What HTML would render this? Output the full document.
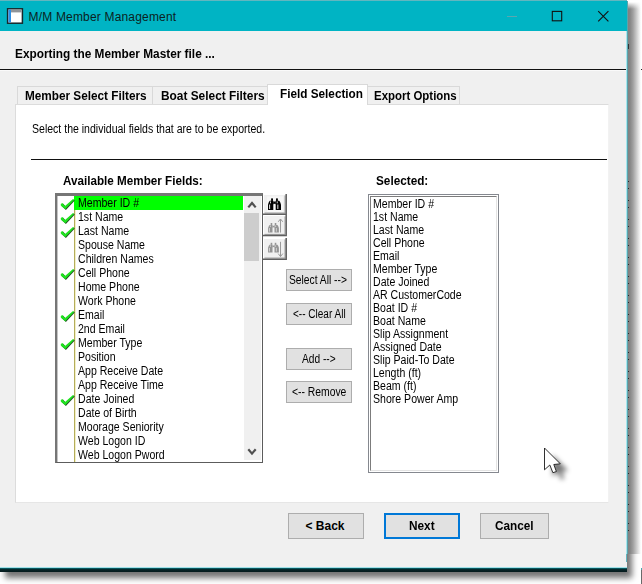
<!DOCTYPE html>
<html>
<head>
<meta charset="utf-8">
<title>M/M Member Management</title>
<style>
html,body{margin:0;padding:0;}
body{width:642px;height:584px;overflow:hidden;background:#fff;font-family:"Liberation Sans",sans-serif;position:relative;}
.abs{position:absolute;}
.t{position:absolute;white-space:nowrap;color:#000;line-height:1;transform-origin:0 0;}
.b{font-weight:bold;}
#win{position:absolute;left:0;top:0;width:627px;height:568px;background:#f0f0f0;}
#titlebar{position:absolute;left:0;top:0;width:627px;height:31px;background:#00b4c4;border-top:1px solid #62b6bf;box-sizing:border-box;}
.btn{position:absolute;background:#e1e1e1;border:1px solid #adadad;box-sizing:border-box;}
.row{position:absolute;left:0;height:14px;}
.li{position:absolute;white-space:nowrap;font-size:12px;line-height:1;color:#000;transform-origin:0 0;}
.L{font-size:12px;line-height:14px;transform:scaleX(0.88);}
.R{font-size:12px;line-height:13px;transform:scaleX(0.88);}
.ib{position:absolute;width:23px;height:21px;box-sizing:border-box;background:#f0f0f0;border-top:1px solid #fff;border-left:1px solid #fff;border-right:1px solid #696969;border-bottom:1px solid #696969;}
</style>
</head>
<body>
<!-- drop shadow -->
<div class="abs" style="left:0;top:1px;width:627px;height:571px;box-shadow:5px 6px 6px 0 rgba(0,0,0,0.55);"></div>
<div class="abs" style="left:627px;top:0;width:15px;height:554px;background:linear-gradient(to right,#7e7e7e 0px,#868686 3px,#a0a0a0 6px,#c4c4c4 9px,#e9e9e9 12px,#fff 14px);"></div>
<div class="abs" style="left:627px;top:0;width:15px;height:9px;background:linear-gradient(to bottom,#fff 0px,#fff 2px,rgba(255,255,255,0) 9px);"></div>
<!-- capture artifacts -->
<div class="abs" style="left:628px;top:181px;width:1px;height:354px;background:repeating-linear-gradient(to bottom,#2a2a2a 0px,#2a2a2a 1.3px,rgba(0,0,0,0) 1.3px,rgba(0,0,0,0) 7px,#2a2a2a 7px,#2a2a2a 8.3px,rgba(0,0,0,0) 8.3px,rgba(0,0,0,0) 19px);"></div>
<div class="abs" style="left:628px;top:44px;width:1px;height:5px;background:#333;"></div>
<div class="abs" style="left:641px;top:69px;width:1px;height:1px;background:#222;"></div>
<div class="abs" style="left:641px;top:568px;width:1px;height:2px;background:#4aa8b0;"></div>
<div class="abs" style="left:641px;top:570px;width:1px;height:14px;background:#6a6a6a;"></div>
<div id="win">
  <div id="titlebar"></div>
</div>
<!-- window bottom border -->
<div class="abs" style="left:0;top:567px;width:627px;height:1px;background:#9fe0e8;"></div>
<div class="abs" style="left:0;top:568px;width:627px;height:4px;background:linear-gradient(to bottom,#0a6f78,#062326 40%,#051a1c);"></div>
<!-- right cyan line -->
<div class="abs" style="left:626px;top:31px;width:1px;height:523px;background:#a5e6ee;"></div>
<div class="abs" style="left:626px;top:554px;width:1px;height:8px;background:#5fb5c0;"></div>
<div class="abs" style="left:627px;top:1px;width:1px;height:553px;background:#5aa4ad;"></div>

<!-- title icon -->
<svg class="abs" style="left:6px;top:7px;" width="19" height="18" viewBox="0 0 19 18">
  <rect x="1.6" y="1.8" width="14.8" height="14.4" fill="#fff" stroke="#16282c" stroke-width="1.5"/>
  <rect x="2.4" y="2.6" width="13.2" height="2.8" fill="#8f9499"/>
  <rect x="2.4" y="2.6" width="2.6" height="12.8" fill="#2a8fe6"/>
</svg>
<div class="t" id="title" style="left:28.5px;top:11px;font-size:12px;color:#0b1f22;letter-spacing:0.18px;">M/M Member Management</div>
<!-- window controls -->
<svg class="abs" style="left:500px;top:0;" width="127" height="32" viewBox="0 0 127 32">
  <line x1="7" y1="16.5" x2="17" y2="16.5" stroke="#5aa7b0" stroke-width="1"/>
  <rect x="52.3" y="11.4" width="9.4" height="9.4" fill="none" stroke="#111" stroke-width="1.1"/>
  <path d="M98.2 11.2 L108.4 21.4 M108.4 11.2 L98.2 21.4" stroke="#111" stroke-width="1.1" fill="none"/>
</svg>

<!-- header -->
<div class="t b" id="hdr" style="left:15px;top:48px;font-size:12px;transform:scaleX(0.986);">Exporting the Member Master file ...</div>
<div class="abs" style="left:0;top:69px;width:626px;height:1px;background:#111;"></div>
<div class="abs" style="left:0;top:70px;width:626px;height:1px;background:#fafafa;"></div>

<!-- tab pane -->
<div class="abs" style="left:15px;top:104px;width:594px;height:399px;background:#fff;border:1px solid #dcdcdc;border-right-color:#f2f2f2;border-bottom-color:#e6e6e6;box-sizing:border-box;"></div>
<!-- tabs -->
<div class="abs" style="left:17px;top:86px;width:136px;height:18px;border:1px solid #d9d9d9;border-bottom:none;box-sizing:border-box;background:#f0f0f0;"></div>
<div class="abs" style="left:152px;top:86px;width:117px;height:18px;border:1px solid #d9d9d9;border-bottom:none;box-sizing:border-box;background:#f0f0f0;"></div>
<div class="abs" style="left:367px;top:86px;width:93px;height:18px;border:1px solid #d9d9d9;border-bottom:none;box-sizing:border-box;background:#f0f0f0;"></div>
<div class="abs" style="left:267px;top:84px;width:101px;height:21px;border:1px solid #d9d9d9;border-bottom:none;box-sizing:border-box;background:#fff;"></div>
<div class="t b" id="tab1" style="left:25px;top:90px;font-size:12px;transform:scaleX(0.98);">Member Select Filters</div>
<div class="t b" id="tab2" style="left:160.5px;top:90px;font-size:12px;transform:scaleX(0.99);">Boat Select Filters</div>
<div class="t b" id="tab3" style="left:279.5px;top:88px;font-size:12px;transform:scaleX(0.98);">Field Selection</div>
<div class="t b" id="tab4" style="left:374px;top:90px;font-size:12px;transform:scaleX(0.954);">Export Options</div>

<div class="t" id="instr" style="left:31.5px;top:123px;font-size:12px;transform:scaleX(0.878);">Select the individual fields that are to be exported.</div>
<div class="abs" style="left:31px;top:159px;width:576px;height:1px;background:#111;"></div>

<div class="t b" id="lab1" style="left:63px;top:175px;font-size:12px;transform:scaleX(0.973);">Available Member Fields:</div>
<div class="t b" id="lab2" style="left:375.5px;top:175px;font-size:12px;transform:scaleX(0.98);">Selected:</div>

<!-- left list -->
<div id="llist" class="abs" style="left:55px;top:193px;width:208px;height:270px;box-sizing:border-box;background:#fff;border-top:3px solid #767676;border-left:2px solid #767676;border-right:1px solid #5c5c5c;border-bottom:1px solid #5c5c5c;overflow:hidden;">
</div>

<!-- right list -->
<div id="rlist" class="abs" style="left:368px;top:194px;width:131px;height:279px;box-sizing:border-box;background:#fff;border:1px solid #85888f;">
  <div class="abs" style="left:1px;top:1px;right:1px;bottom:1px;box-sizing:border-box;border-top:1px solid #7c7c7c;border-left:1px solid #7c7c7c;border-right:1px solid #e3e3e3;border-bottom:1px solid #e3e3e3;"></div>
</div>

<svg width="0" height="0" style="position:absolute"><defs>
<g id="chk">
<path d="M0.8 6.1 L2.3 4.9 L5.0 8.0 L13.0 0.9 L14.1 1.9 L5.2 11.3 L0.8 7.5 Z" transform="translate(0.7,0.6)" fill="#245224"/>
<path d="M0.8 6.1 L2.3 4.9 L5.0 8.0 L13.0 0.9 L14.1 1.9 L5.2 11.3 L0.8 7.5 Z" fill="#1fe31f"/>
</g>
<g id="bino">
<rect x="3.1" y="0" width="1.9" height="2.6"/>
<rect x="8" y="0" width="1.9" height="2.6"/>
<path d="M1.8 2.4 H5.3 V12 H0 V6.2 L0.9 3.8 Z"/>
<path d="M7.7 2.4 H11.2 L12.1 3.8 L13 6.2 V12 H7.7 Z"/>
<path d="M5.2 3.3 H7.8 V6 Q6.5 4.8 5.2 6 Z"/>
</g>
<g id="binohl">
<rect x="1.2" y="6.3" width="0.9" height="4.6"/>
<rect x="2.2" y="3.1" width="0.8" height="2"/>
<rect x="9.4" y="6.3" width="0.9" height="4.6"/>
<rect x="8.8" y="3.1" width="0.8" height="2"/>
</g>
</defs></svg>
<!-- left list rows -->
<div class="abs" style="left:57px;top:196px;width:1px;height:266px;background:#c4c4c4;"></div>
<div class="abs" style="left:74px;top:196px;width:1px;height:266px;background:#b4ad5a;"></div>
<div class="abs" style="left:75px;top:210px;width:1px;height:252px;background:#f4f0c8;"></div>
<div class="abs" style="left:74px;top:196px;width:169px;height:14px;background:#00ff00;"></div>
<svg class="abs" style="left:60px;top:198px;" width="15" height="13" viewBox="0 0 15 13"><use href="#chk"/></svg>
<div class="li L" style="left:78px;top:196px;">Member ID #</div>
<svg class="abs" style="left:60px;top:212px;" width="15" height="13" viewBox="0 0 15 13"><use href="#chk"/></svg>
<div class="li L" style="left:78px;top:210px;">1st Name</div>
<svg class="abs" style="left:60px;top:226px;" width="15" height="13" viewBox="0 0 15 13"><use href="#chk"/></svg>
<div class="li L" style="left:78px;top:224px;">Last Name</div>
<div class="li L" style="left:78px;top:238px;">Spouse Name</div>
<div class="li L" style="left:78px;top:252px;">Children Names</div>
<svg class="abs" style="left:60px;top:268px;" width="15" height="13" viewBox="0 0 15 13"><use href="#chk"/></svg>
<div class="li L" style="left:78px;top:266px;">Cell Phone</div>
<div class="li L" style="left:78px;top:280px;">Home Phone</div>
<div class="li L" style="left:78px;top:294px;">Work Phone</div>
<svg class="abs" style="left:60px;top:310px;" width="15" height="13" viewBox="0 0 15 13"><use href="#chk"/></svg>
<div class="li L" style="left:78px;top:308px;">Email</div>
<div class="li L" style="left:78px;top:322px;">2nd Email</div>
<svg class="abs" style="left:60px;top:338px;" width="15" height="13" viewBox="0 0 15 13"><use href="#chk"/></svg>
<div class="li L" style="left:78px;top:336px;">Member Type</div>
<div class="li L" style="left:78px;top:350px;">Position</div>
<div class="li L" style="left:78px;top:364px;">App Receive Date</div>
<div class="li L" style="left:78px;top:378px;">App Receive Time</div>
<svg class="abs" style="left:60px;top:394px;" width="15" height="13" viewBox="0 0 15 13"><use href="#chk"/></svg>
<div class="li L" style="left:78px;top:392px;">Date Joined</div>
<div class="li L" style="left:78px;top:406px;">Date of Birth</div>
<div class="li L" style="left:78px;top:420px;">Moorage Seniority</div>
<div class="li L" style="left:78px;top:434px;">Web Logon ID</div>
<div class="li L" style="left:78px;top:448px;">Web Logon Pword</div>
<!-- right list rows -->
<div class="li R" style="left:373px;top:198px;">Member ID #</div>
<div class="li R" style="left:373px;top:211px;">1st Name</div>
<div class="li R" style="left:373px;top:224px;">Last Name</div>
<div class="li R" style="left:373px;top:237px;">Cell Phone</div>
<div class="li R" style="left:373px;top:250px;">Email</div>
<div class="li R" style="left:373px;top:263px;">Member Type</div>
<div class="li R" style="left:373px;top:276px;">Date Joined</div>
<div class="li R" style="left:373px;top:289px;">AR CustomerCode</div>
<div class="li R" style="left:373px;top:302px;">Boat ID #</div>
<div class="li R" style="left:373px;top:315px;">Boat Name</div>
<div class="li R" style="left:373px;top:328px;">Slip Assignment</div>
<div class="li R" style="left:373px;top:341px;">Assigned Date</div>
<div class="li R" style="left:373px;top:354px;">Slip Paid-To Date</div>
<div class="li R" style="left:373px;top:367px;">Length (ft)</div>
<div class="li R" style="left:373px;top:380px;">Beam (ft)</div>
<div class="li R" style="left:373px;top:393px;">Shore Power Amp</div>
<!-- scrollbar -->
<div class="abs" style="left:244px;top:196px;width:17px;height:264px;background:#f0f0f0;"></div>
<div class="abs" style="left:261px;top:196px;width:1px;height:266px;background:#fff;"></div>
<div class="abs" style="left:244px;top:213px;width:15px;height:48px;background:#cdcdcd;"></div>
<svg class="abs" style="left:243px;top:196px;" width="18" height="17" viewBox="0 0 18 17"><path d="M5.3 11.4 L9 7 L12.7 11.4" fill="none" stroke="#505050" stroke-width="2.2"/></svg>
<svg class="abs" style="left:243px;top:443px;" width="18" height="17" viewBox="0 0 18 17"><path d="M5.3 6.2 L9 10.6 L12.7 6.2" fill="none" stroke="#505050" stroke-width="2.2"/></svg>
<!-- icon buttons -->
<svg class="abs" style="left:263px;top:193.5px;" width="24" height="21" viewBox="0 0 24 21">
  <rect x="0" y="0" width="24" height="21" fill="#f0f0f0"/>
  <rect x="4" y="2.5" width="16" height="15.5" fill="#f7f7f7"/>
  <path d="M0.5 20 V0.5 H23" stroke="#ffffff" stroke-width="1" fill="none"/>
  <path d="M22 1.5 V19 H1.5" stroke="#a0a0a0" stroke-width="1" fill="none"/>
  <path d="M23.2 0 V20.2 H0" stroke="#5f5f5f" stroke-width="1.5" fill="none"/>
  <g transform="translate(5,4.4) scale(1,0.97)"><use href="#bino" fill="#000"/><use href="#binohl" fill="#fff"/></g>
</svg>
<svg class="abs" style="left:263px;top:215.2px;" width="24" height="21.4" viewBox="0 0 24 21.4">
  <rect x="0" y="0" width="24" height="21.4" fill="#f0f0f0"/>
  <path d="M0.5 20.4 V0.5 H23" stroke="#ffffff" stroke-width="1" fill="none"/>
  <path d="M22 1.5 V19.4 H1.5" stroke="#a0a0a0" stroke-width="1" fill="none"/>
  <path d="M23.2 0 V20.6 H0" stroke="#5f5f5f" stroke-width="1.5" fill="none"/>
  <g transform="translate(5.1,8) scale(0.83,0.8)"><use href="#bino" fill="#939393"/><use href="#binohl" fill="#e4e4e4"/></g>
  <path d="M17.5 17.6 V4.2 M15.2 6.8 L17.5 4 L19.8 6.8" stroke="#9a9a9a" stroke-width="1" fill="none"/>
</svg>
<svg class="abs" style="left:263px;top:237.6px;" width="24" height="22" viewBox="0 0 24 22">
  <rect x="0" y="0" width="24" height="22" fill="#f0f0f0"/>
  <path d="M0.5 21 V0.5 H23" stroke="#ffffff" stroke-width="1" fill="none"/>
  <path d="M22 1.5 V20 H1.5" stroke="#a0a0a0" stroke-width="1" fill="none"/>
  <path d="M23.2 0 V21.2 H0" stroke="#5f5f5f" stroke-width="1.5" fill="none"/>
  <g transform="translate(5.1,4.8) scale(0.83,0.8)"><use href="#bino" fill="#939393"/><use href="#binohl" fill="#e4e4e4"/></g>
  <path d="M17.5 3.8 V18.4 M15.2 15.6 L17.5 18.6 L19.8 15.6" stroke="#9a9a9a" stroke-width="1" fill="none"/>
</svg>
<!-- mid buttons -->
<div class="btn" style="left:286px;top:269px;width:66px;height:22px;"></div>
<div class="btn" style="left:286px;top:303px;width:66px;height:22px;"></div>
<div class="btn" style="left:286px;top:348px;width:66px;height:22px;"></div>
<div class="btn" style="left:286px;top:381px;width:66px;height:22px;"></div>
<div class="t" id="mb1" style="left:288.8px;top:274px;font-size:12px;transform:scaleX(0.855);">Select All --&gt;</div>
<div class="t" id="mb2" style="left:292.5px;top:307.5px;font-size:12px;transform:scaleX(0.835);">&lt;-- Clear All</div>
<div class="t" id="mb3" style="left:302px;top:352.5px;font-size:12px;transform:scaleX(0.847);">Add --&gt;</div>
<div class="t" id="mb4" style="left:291.5px;top:385.5px;font-size:12px;transform:scaleX(0.863);">&lt;-- Remove</div>

<!-- bottom buttons -->
<div class="btn" style="left:288px;top:513px;width:76px;height:26px;"></div>
<div class="btn" style="left:384px;top:513px;width:76px;height:26px;border:2px solid #0078d7;"></div>
<div class="btn" style="left:480px;top:513px;width:69px;height:26px;"></div>
<div class="t b" id="bb1" style="left:305.5px;top:520px;font-size:12px;">&lt; Back</div>
<div class="t b" id="bb2" style="left:408.5px;top:520px;font-size:12px;transform:scaleX(0.985);">Next</div>
<div class="t b" id="bb3" style="left:494.5px;top:520px;font-size:12px;transform:scaleX(0.98);">Cancel</div>

<!-- mouse cursor -->
<svg class="abs" style="left:540px;top:444px;" width="40" height="46" viewBox="0 0 40 46">
  <defs><filter id="cs" x="-50%" y="-50%" width="200%" height="200%"><feGaussianBlur stdDeviation="2.6"/></filter></defs>
  <path d="M4.5 4 V25.8 L9.8 21 L12.9 28.7 L16.4 27.5 L13.8 20.5 L20.3 19.8 Z" transform="translate(8,7)" fill="#000" opacity="0.52" filter="url(#cs)"/>
  <path d="M4.5 4 V25.8 L9.8 21 L12.9 28.7 L16.4 27.5 L13.8 20.5 L20.3 19.8 Z" fill="#fff" stroke="#1a1a1a" stroke-width="0.9" stroke-linejoin="miter"/>
</svg>
</body>
</html>
